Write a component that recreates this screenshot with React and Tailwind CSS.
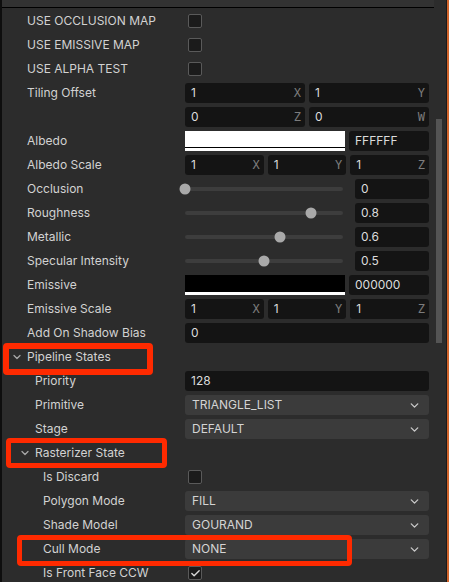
import { ChevronDown, Check } from 'lucide-react';

function Label({ text, indent = 0 }) {
  const pad = ['pl-[25px]', 'pl-[33px]', 'pl-[41px]'][indent];
  return <div className={`w-[183px] shrink-0 truncate ${pad}`}>{text}</div>;
}

function Row({ label, indent, children }) {
  return (
    <div className="flex h-[24px] shrink-0 items-center">
      <Label text={label} indent={indent} />
      <div className="flex w-[244px] items-center">{children}</div>
    </div>
  );
}

function Field({ value, axis }) {
  return (
    <div className="flex h-[20px] flex-1 items-center justify-between rounded-[3px] bg-[#141414] pl-[6px] pr-[4px] text-[#dcdcdc]">
      <span>{value}</span>
      {axis && <span className="font-['DejaVu_Sans_Mono',monospace] text-[12px] text-[#7c7c7c]">{axis}</span>}
    </div>
  );
}

function Box({ checked }) {
  return (
    <div className="ml-[3px] flex h-[14px] w-[14px] items-center justify-center rounded-[2px] border border-[#5a5a5a] bg-[#1b1b1b]">
      {checked && <Check size={11} strokeWidth={3} className="text-[#d8d8d8]" />}
    </div>
  );
}

function Slider({ pct, value }) {
  return (
    <>
      <div className="relative h-[4px] w-[158px] shrink-0 rounded-full bg-[#3d3d3d]">
        <div
          className="absolute top-1/2 h-[11px] w-[11px] -translate-x-1/2 -translate-y-1/2 rounded-full bg-[#a9a9a9]"
          style={{ left: `${pct}%` }}
        />
      </div>
      <div className="ml-[12px] flex-1">
        <Field value={value} />
      </div>
    </>
  );
}

function Swatch({ color, hex }) {
  return (
    <>
      <div className="flex h-[20px] w-[160px] shrink-0 flex-col">
        <div className={`h-[16px] ${color}`} />
        <div className="h-[1px] bg-black" />
        <div className="h-[3px] bg-white" />
      </div>
      <div className="ml-[4px] flex-1">
        <Field value={hex} />
      </div>
    </>
  );
}

function Select({ value }) {
  return (
    <div className="flex h-[20px] flex-1 items-center justify-between rounded-[3px] bg-[#3b3b3b] pl-[7px] pr-[8px] text-[#d4d4d4]">
      <span>{value}</span>
      <ChevronDown size={13} strokeWidth={2.5} className="text-[#c8c8c8]" />
    </div>
  );
}

function Header({ label, indent }) {
  const pad = indent ? 'pl-[17px]' : 'pl-[9px]';
  return (
    <div className={`flex h-[24px] shrink-0 items-center gap-[4px] ${pad}`}>
      <ChevronDown size={12} strokeWidth={2.5} className="text-[#a8a8a8]" />
      <span>{label}</span>
    </div>
  );
}

export default function App() {
  return (
    <div className="relative flex h-[582px] w-[449px] overflow-hidden bg-[#2c2c2c] font-['Inter',sans-serif] text-[12px] text-[#d2d2d2]">
      <div className="w-[2px] shrink-0 bg-[#0e0e0e]" />
      <div className="flex min-w-0 flex-1 flex-col">
        <div className="h-[7px] shrink-0 bg-[#323232]" />
        <div className="h-[1px] shrink-0 bg-black" />
        <div className="shrink-0 pt-[1px]">
          <Row label="USE OCCLUSION MAP"><Box /></Row>
          <Row label="USE EMISSIVE MAP"><Box /></Row>
          <Row label="USE ALPHA TEST"><Box /></Row>
          <Row label="Tiling Offset">
            <div className="flex flex-1 gap-[4px]"><Field value="1" axis="X" /><Field value="1" axis="Y" /></div>
          </Row>
          <Row label="">
            <div className="flex flex-1 gap-[4px]"><Field value="0" axis="Z" /><Field value="0" axis="W" /></div>
          </Row>
          <Row label="Albedo"><Swatch color="bg-white" hex="FFFFFF" /></Row>
          <Row label="Albedo Scale">
            <div className="flex flex-1 gap-[4px]"><Field value="1" axis="X" /><Field value="1" axis="Y" /><Field value="1" axis="Z" /></div>
          </Row>
          <Row label="Occlusion"><Slider pct={0} value="0" /></Row>
          <Row label="Roughness"><Slider pct={80} value="0.8" /></Row>
          <Row label="Metallic"><Slider pct={60} value="0.6" /></Row>
          <Row label="Specular Intensity"><Slider pct={50} value="0.5" /></Row>
          <Row label="Emissive"><Swatch color="bg-black" hex="000000" /></Row>
          <Row label="Emissive Scale">
            <div className="flex flex-1 gap-[4px]"><Field value="1" axis="X" /><Field value="1" axis="Y" /><Field value="1" axis="Z" /></div>
          </Row>
          <Row label="Add On Shadow Bias"><Field value="0" /></Row>
          <Header label="Pipeline States" />
          <Row label="Priority" indent={1}><Field value="128" /></Row>
          <Row label="Primitive" indent={1}><Select value="TRIANGLE_LIST" /></Row>
          <Row label="Stage" indent={1}><Select value="DEFAULT" /></Row>
          <Header label="Rasterizer State" indent />
          <Row label="Is Discard" indent={2}><Box /></Row>
          <Row label="Polygon Mode" indent={2}><Select value="FILL" /></Row>
          <Row label="Shade Model" indent={2}><Select value="GOURAND" /></Row>
          <Row label="Cull Mode" indent={2}><Select value="NONE" /></Row>
          <Row label="Is Front Face CCW" indent={2}><Box checked /></Row>
        </div>
      </div>
      <div className="w-[12px] shrink-0 pt-[119px] pl-[2px]">
        <div className="h-[224px] w-[6px] bg-[#545454]" />
      </div>
      <div className="w-[1px] shrink-0 bg-[#1a1a1a]" />
      <div className="w-[2px] shrink-0 bg-[#d2652c]" />

      {/* annotation boxes */}
      <div className="absolute left-[3px] top-[343px] h-[32px] w-[150px] rounded-[4px] border-[6px] border-[#ff2a00]" />
      <div className="absolute left-[6px] top-[438px] h-[30px] w-[161px] rounded-[4px] border-[5px] border-[#ff2a00]" />
      <div className="absolute left-[17px] top-[535px] h-[31px] w-[335px] rounded-[4px] border-[5px] border-[#ff2a00]" />
    </div>
  );
}
